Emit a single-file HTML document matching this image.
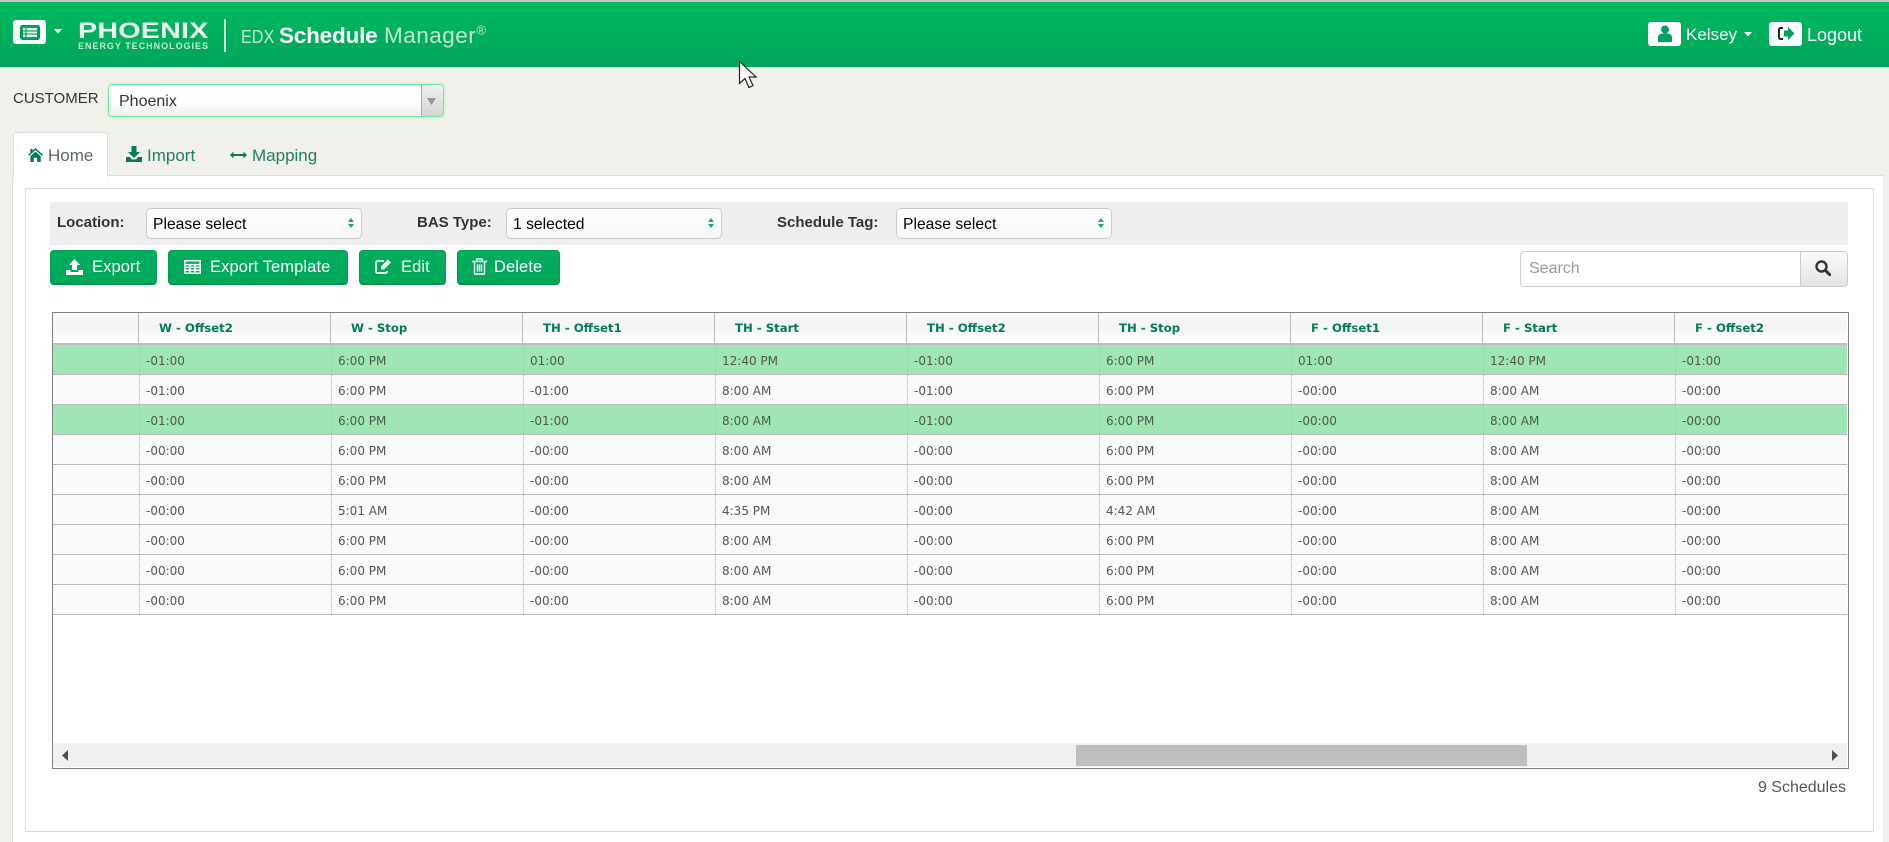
<!DOCTYPE html>
<html><head><meta charset="utf-8"><title>EDX Schedule Manager</title>
<style>
*{box-sizing:border-box}
html,body{margin:0;padding:0}
body{width:1889px;height:842px;overflow:hidden;background:#f1f0ea;font-family:"Liberation Sans",Arial,sans-serif;position:relative}
.a{position:absolute;white-space:nowrap}
svg{display:block;position:absolute}
.hdr{left:0;top:0;width:1889px;height:67px;background:linear-gradient(#00b860,#00a65a);border-top:2px solid #c9c9c9}
.wb{background:#fff;border-radius:3px;height:24px;width:33px}
.sel{height:31px;width:216px;top:208px;background:linear-gradient(#fff,#f6f6f6);border:1px solid #ccc;border-radius:5px;font-size:15.7px;color:#000;line-height:31px;padding-left:6px}
.lab{top:213px;font-size:15px;font-weight:bold;color:#333;line-height:20px}
.btn{top:250px;height:35px;background:linear-gradient(#00ad5e,#00a759);border:1px solid #00a050;border-bottom:2px solid #00904c;border-radius:4px;color:#fff;font-size:16.5px;line-height:32px;letter-spacing:.1px}
.btn span{position:absolute;top:0}
.tbl{left:52px;top:312px;width:1797px;height:457px;border:1px solid #808080;background:#fff;overflow:hidden}
.r{position:absolute;left:0;width:1794px;height:30px;display:flex;border-bottom:1px solid #bbb;background:#fafafa;font:12px/33px "DejaVu Sans","Liberation Sans",sans-serif;color:#555}
.r.g{background:#a0e6b4;color:#4a5a4e}
.r div{width:192px;flex:none;padding-left:6px;border-left:1px dotted #b5b5b5}
.r div:first-child{width:86px;padding:0;border:0}
.h{position:absolute;left:0;top:0;width:1794px;height:32px;display:flex;background:linear-gradient(#fafafa,#f4f4f4 45%,#fff);border-bottom:2px solid #c0c0c0;font:bold 11.7px/30px "DejaVu Sans","Liberation Sans",sans-serif;color:#007a5a}
.h div{width:192px;flex:none;padding-left:20px;border-left:1px solid #bbb}
.h div:first-child{width:85px;padding:0;border:0}
</style></head>
<body>
<div class="a hdr"></div>

<div class="a wb" style="left:13px;top:20px"></div>
<svg style="left:20px;top:25px" width="20" height="15" viewBox="0 0 20 15"><rect x=".5" y=".5" width="19" height="14" rx="2" fill="#00a65a" stroke="#0a8f74"/><rect x="3" y="3" width="14" height="9" fill="#dff5e8"/><path d="M3 6h14M3 9h14M6 3v9" stroke="#0a8f60" stroke-width="1"/></svg>
<svg style="left:54px;top:29px" width="8" height="5" viewBox="0 0 8 5"><path d="M0 0h8L4 4.5z" fill="#fff"/></svg>

<div class="a" style="left:78px;top:19px;font-size:22px;font-weight:bold;color:#eef9f2;line-height:24px;letter-spacing:.2px;transform:scaleX(1.3);transform-origin:left">PHOENIX</div>
<div class="a" style="left:78px;top:41px;font-size:9px;font-weight:bold;color:#c7ead6;line-height:10px;letter-spacing:.98px">ENERGY TECHNOLOGIES</div>
<div class="a" style="left:224px;top:19px;width:2px;height:33px;background:#cdeedb"></div>
<div class="a" style="left:241px;top:23px;font-size:18px;color:#c0e8d0;line-height:28px;transform:scaleX(.9);transform-origin:left">EDX</div>
<div class="a" style="left:279px;top:22px;font-size:22.5px;font-weight:bold;color:#fff;line-height:28px;letter-spacing:-.2px">Schedule</div>
<div class="a" style="left:384px;top:22px;font-size:22.5px;color:#bfe8d0;line-height:28px;letter-spacing:.5px">Manager<sup style="font-size:13px;line-height:0">®</sup></div>

<div class="a wb" style="left:1648px;top:22px"></div>
<svg style="left:1658px;top:25px" width="14" height="17" viewBox="0 0 14 17"><circle cx="7" cy="4.5" r="4" fill="#00a060"/><path d="M0 17v-4c0-3 2-4.5 4-4.5h6c2 0 4 1.5 4 4.5v4z" fill="#00a060"/></svg>
<div class="a" style="left:1686px;top:23px;font-size:17px;color:#fff;line-height:24px">Kelsey</div>
<svg style="left:1744px;top:32px" width="8" height="5" viewBox="0 0 8 5"><path d="M0 0h8L4 4.5z" fill="#fff"/></svg>
<div class="a wb" style="left:1769px;top:22px"></div>
<svg style="left:1777px;top:26px" width="18" height="15" viewBox="0 0 18 15"><path d="M6 2H3.5A1.5 1.5 0 0 0 2 3.5v8A1.5 1.5 0 0 0 3.5 13H6" fill="none" stroke="#222" stroke-width="2"/><path d="M7 4.5h4V1l6.5 6.5L11 14v-3.500H7z" fill="#00a060"/></svg>
<div class="a" style="left:1807px;top:23px;font-size:18px;color:#fff;line-height:24px">Logout</div>

<svg style="left:738px;top:60px;z-index:9" width="20" height="29" viewBox="0 0 20 29"><path d="M1.5 1.5v22l5.5-5 4 9 4-2-4-8.5h7z" fill="#fff" stroke="#222" stroke-width="1.2"/></svg>

<div class="a" style="left:13px;top:88px;font-size:15px;color:#333;line-height:22px">CUSTOMER</div>
<div class="a" style="left:108px;top:84px;width:336px;height:33px;border:1px solid #6fee9f;border-radius:4px;background:linear-gradient(#fff 55%,#eee);box-shadow:0 0 2px #7ff0a8;font-size:16px;color:#333;line-height:34px;padding-left:10px">Phoenix
  <div class="a" style="right:0;top:0;width:22px;height:31px;background:linear-gradient(#f0f0f0,#d4d4d4);border-left:1px solid #aaa;border-radius:0 3px 3px 0"></div>
  <svg style="right:7px;top:13px" width="9" height="7" viewBox="0 0 9 7"><path d="M0 0h9L4.5 7z" fill="#999"/></svg>
</div>

<!-- tabs content -->
<div class="a" style="left:12px;top:175px;width:1871px;height:667px;background:#fff;border-left:1px solid #ddd;border-top:1px solid #ddd"></div>
<div class="a" style="left:13px;top:132px;width:95px;height:45px;background:#fff;border:1px solid #ddd;border-bottom:0;border-radius:4px 4px 0 0"></div>
<svg style="left:28px;top:148px" width="15" height="14" viewBox="0 0 15 14"><path d="M7.5 0L15 6.8l-1 1.1L7.5 2.1 1 7.9 0 6.8l2.3-2.1V1h2.2v1.700z" fill="#067a5c"/><path d="M2.3 8.200l5.200-4.600 5.200 4.600V14H9.200V9.700H5.800V14H2.300z" fill="#067a5c"/></svg>
<div class="a" style="left:48px;top:145px;font-size:17px;color:#5a6a66;line-height:22px">Home</div>
<svg style="left:126px;top:146px" width="16" height="16" viewBox="0 0 16 16"><path d="M5.5 0h5v6H14L8 12 2 6h3.5z" fill="#067a5c"/><path d="M0 11h4l2 2.5h4L12 11h4v5H0z" fill="#067a5c"/></svg>
<div class="a" style="left:147px;top:145px;font-size:17px;color:#1f8068;line-height:22px">Import</div>
<svg style="left:230px;top:151px" width="17" height="8" viewBox="0 0 17 8"><path d="M0 4l3.5-3.5V3h10V.5L17 4l-3.5 3.500V5h-10v2.500z" fill="#067a5c"/></svg>
<div class="a" style="left:252px;top:145px;font-size:17px;color:#1f8068;line-height:22px">Mapping</div>

<div class="a" style="left:25px;top:188px;width:1849px;height:644px;background:#fff;border:1px solid #ddd"></div>

<!-- filters -->
<div class="a" style="left:50px;top:202px;width:1798px;height:43px;background:#eee"></div>
<div class="a lab" style="left:57px">Location:</div>
<div class="a sel" style="left:146px">Please select</div>
<div class="a lab" style="left:417px">BAS Type:</div>
<div class="a sel" style="left:506px">1 selected</div>
<div class="a lab" style="left:777px">Schedule Tag:</div>
<div class="a sel" style="left:896px">Please select</div>
<svg style="left:348px;top:218px" width="6" height="10" viewBox="0 0 6 10"><path d="M3 0l3 4H0zM3 10L0 6h6z" fill="#1faa60"/></svg>
<svg style="left:708px;top:218px" width="6" height="10" viewBox="0 0 6 10"><path d="M3 0l3 4H0zM3 10L0 6h6z" fill="#1faa60"/></svg>
<svg style="left:1098px;top:218px" width="6" height="10" viewBox="0 0 6 10"><path d="M3 0l3 4H0zM3 10L0 6h6z" fill="#1faa60"/></svg>

<!-- buttons -->
<div class="a btn" style="left:50px;width:107px"><span style="left:41px">Export</span></div>
<svg style="left:66px;top:259px" width="17" height="16" viewBox="0 0 17 16"><path d="M8.5 0l5.5 6h-3v5H6V6H3z" fill="#fff"/><path d="M0 11h4.5v2h8v-2H17v5H0z" fill="#fff"/></svg>
<div class="a btn" style="left:168px;width:180px"><span style="left:41px">Export Template</span></div>
<svg style="left:184px;top:260px" width="17" height="14" viewBox="0 0 17 14"><path d="M.8.8h15.400v12.400H.8zM.8 4.600h15.400M.8 7.400h15.400M.8 10.300h15.400M6 4.600v8.600M11 4.600v8.600" fill="none" stroke="#fff" stroke-width="1.5"/></svg>
<div class="a btn" style="left:359px;width:87px"><span style="left:41px">Edit</span></div>
<svg style="left:375px;top:258px" width="18" height="16" viewBox="0 0 18 16"><path d="M12 13v.5a1.5 1.5 0 0 1-1.500 1.500h-8A1.500 1.500 0 0 1 1 13.500v-9A1.500 1.500 0 0 1 2.500 3H9" fill="none" stroke="#fff" stroke-width="1.8"/><path d="M6 8.500L13 1.500l3 3-7 7H6z" fill="#fff"/></svg>
<div class="a btn" style="left:457px;width:103px"><span style="left:36px">Delete</span></div>
<svg style="left:472px;top:258px" width="15" height="17" viewBox="0 0 15 17"><path d="M0 3.500h15M5 3V1h5v2M2.500 4v12h10V4M5.500 6.500v7M7.500 6.500v7M9.500 6.500v7" fill="none" stroke="#fff" stroke-width="1.4"/></svg>

<!-- search -->
<div class="a" style="left:1520px;top:251px;width:328px;height:36px;background:#fff;border:1px solid #ccc;border-radius:4px;font-size:16px;color:#999;line-height:33px;padding-left:8px">Search
  <div class="a" style="left:279px;top:0;width:47px;height:34px;background:linear-gradient(#fafafa,#e4e4e4);border-left:1px solid #ccc;border-radius:0 3px 3px 0"></div>
</div>
<svg style="left:1815px;top:260px" width="16" height="16" viewBox="0 0 16 16"><circle cx="6.5" cy="6.5" r="5" fill="none" stroke="#333" stroke-width="2.4"/><path d="M10.500 10.500L15 15" stroke="#333" stroke-width="3" stroke-linecap="round"/></svg>

<!-- table -->
<div class="a tbl">
 <div class="h"><div></div><div>W - Offset2</div><div>W - Stop</div><div>TH - Offset1</div><div>TH - Start</div><div>TH - Offset2</div><div>TH - Stop</div><div>F - Offset1</div><div>F - Start</div><div>F - Offset2</div></div>
 <div class="r g" style="top:32px"><div></div><div>-01:00</div><div>6:00 PM</div><div>01:00</div><div>12:40 PM</div><div>-01:00</div><div>6:00 PM</div><div>01:00</div><div>12:40 PM</div><div>-01:00</div></div>
 <div class="r" style="top:62px"><div></div><div>-01:00</div><div>6:00 PM</div><div>-01:00</div><div>8:00 AM</div><div>-01:00</div><div>6:00 PM</div><div>-00:00</div><div>8:00 AM</div><div>-00:00</div></div>
 <div class="r g" style="top:92px"><div></div><div>-01:00</div><div>6:00 PM</div><div>-01:00</div><div>8:00 AM</div><div>-01:00</div><div>6:00 PM</div><div>-00:00</div><div>8:00 AM</div><div>-00:00</div></div>
 <div class="r" style="top:122px"><div></div><div>-00:00</div><div>6:00 PM</div><div>-00:00</div><div>8:00 AM</div><div>-00:00</div><div>6:00 PM</div><div>-00:00</div><div>8:00 AM</div><div>-00:00</div></div>
 <div class="r" style="top:152px"><div></div><div>-00:00</div><div>6:00 PM</div><div>-00:00</div><div>8:00 AM</div><div>-00:00</div><div>6:00 PM</div><div>-00:00</div><div>8:00 AM</div><div>-00:00</div></div>
 <div class="r" style="top:182px"><div></div><div>-00:00</div><div>5:01 AM</div><div>-00:00</div><div>4:35 PM</div><div>-00:00</div><div>4:42 AM</div><div>-00:00</div><div>8:00 AM</div><div>-00:00</div></div>
 <div class="r" style="top:212px"><div></div><div>-00:00</div><div>6:00 PM</div><div>-00:00</div><div>8:00 AM</div><div>-00:00</div><div>6:00 PM</div><div>-00:00</div><div>8:00 AM</div><div>-00:00</div></div>
 <div class="r" style="top:242px"><div></div><div>-00:00</div><div>6:00 PM</div><div>-00:00</div><div>8:00 AM</div><div>-00:00</div><div>6:00 PM</div><div>-00:00</div><div>8:00 AM</div><div>-00:00</div></div>
 <div class="r" style="top:272px"><div></div><div>-00:00</div><div>6:00 PM</div><div>-00:00</div><div>8:00 AM</div><div>-00:00</div><div>6:00 PM</div><div>-00:00</div><div>8:00 AM</div><div>-00:00</div></div>
 <div class="a" style="left:0;top:430px;width:1794px;height:24px;background:#f0f0f0"></div>
 <div class="a" style="left:1023px;top:432px;width:451px;height:21px;background:#bebebe"></div>
</div>
<svg style="left:62px;top:750px" width="6" height="11" viewBox="0 0 6 11"><path d="M6 0v11L0 5.5z" fill="#505050"/></svg>
<svg style="left:1832px;top:750px" width="6" height="11" viewBox="0 0 6 11"><path d="M0 0v11l6-5.5z" fill="#505050"/></svg>

<div class="a" style="right:43px;top:777px;font-size:16px;color:#555;line-height:22px">9 Schedules</div>
</body></html>
